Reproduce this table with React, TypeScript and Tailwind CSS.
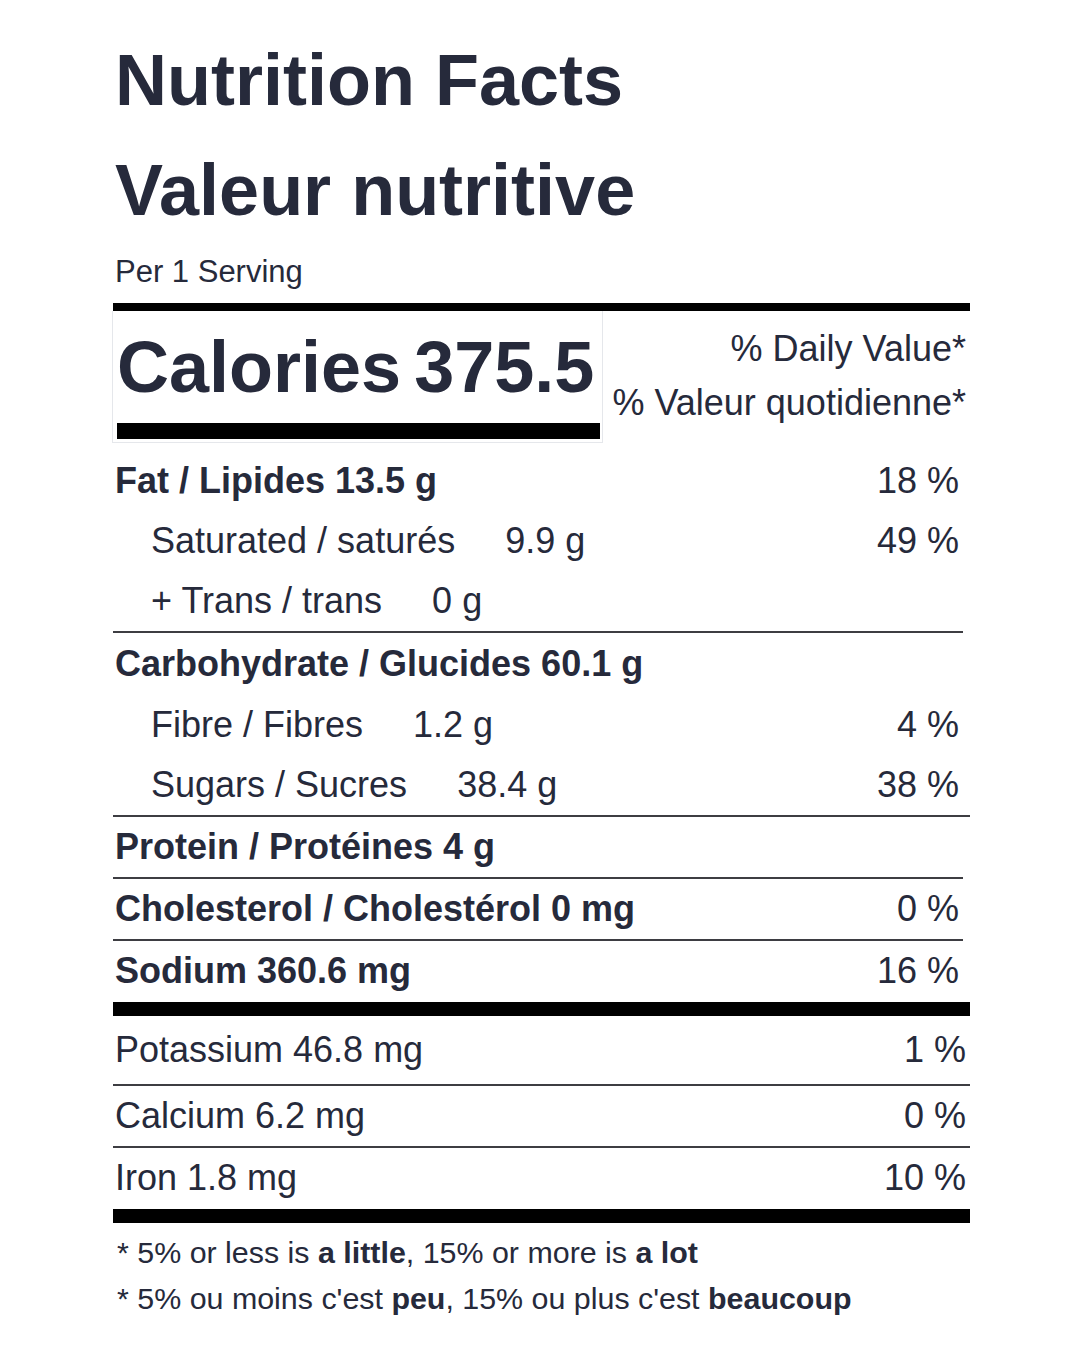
import React from 'react'

type Row = {
  label: string
  amount?: string
  dv?: string
  bold?: boolean
  indent?: boolean
  h?: string
}

// upper block: macro nutrients, separators drawn between groups
const fatGroup: Row[] = [
  { label: 'Fat / Lipides 13.5 g', dv: '18 %', bold: true },
  { label: 'Saturated / saturés', amount: '9.9 g', dv: '49 %', indent: true },
  { label: '+ Trans / trans', amount: '0 g', indent: true },
]

const carbGroup: Row[] = [
  { label: 'Carbohydrate / Glucides 60.1 g', bold: true, h: 'h-[61px]' },
  { label: 'Fibre / Fibres', amount: '1.2 g', dv: '4 %', indent: true, h: 'h-[61px]' },
  { label: 'Sugars / Sucres', amount: '38.4 g', dv: '38 %', indent: true },
]

const NutrientRow = ({ row }: { row: Row }) => (
  <div
    className={`flex items-center justify-between leading-[60px] text-[36px] ${row.h ?? 'h-[60px]'}`}
  >
    <div className={`flex ${row.indent ? 'pl-[38px]' : 'pl-[2px]'} ${row.bold ? 'font-bold' : ''}`}>
      <span>{row.label}</span>
      {row.amount && <span className="ml-[50px]">{row.amount}</span>}
    </div>
    {row.dv && <span className="pr-[11px]">{row.dv}</span>}
  </div>
)

const Rule = ({ short }: { short?: boolean }) => (
  <div className={`h-[2px] bg-[#3d3d42] ${short ? 'mr-[7px]' : ''}`} />
)

const MineralRow = ({ label, dv, h }: { label: string; dv: string; h: string }) => (
  <div className={`flex items-center justify-between text-[36px] ${h}`}>
    <span className="pl-[2px]">{label}</span>
    <span className="pr-[4px]">{dv}</span>
  </div>
)

export default function App() {
  return (
    <div
      className="w-[1080px] h-[1350px] bg-white text-[#262a3b] overflow-hidden"
      style={{ fontFamily: '"Liberation Sans", Arial, sans-serif' }}
    >
      <div className="ml-[112px] w-[858px] pt-[25px]">
        <h1 className="text-[72px] font-bold leading-[110px] ml-[3px]">Nutrition Facts</h1>
        <h1 className="text-[72px] font-bold leading-[110px] ml-[3px]">Valeur nutritive</h1>
        <p className="mt-[4px] text-[31px] leading-[45px] pl-[3px]">Per 1 Serving</p>

        <div className="mt-[9px] h-[8px] bg-black ml-[1px]" />

        {/* calories + daily value header */}
        <div className="flex h-[132px]">
          <div className="w-[491px] border border-t-0 border-[#e5e7eb] pl-[4px] pr-[2px] pt-[20px]">
            <div className="flex items-baseline text-[72px] font-bold leading-[72px]">
              <span>Calories</span>
              <span className="ml-[13px]">375.5</span>
            </div>
            <div className="mt-[20px] h-[16px] bg-black" />
          </div>
          <div className="flex-1 pt-[11px] pr-[4px] text-right text-[36px] leading-[54px]">
            <div>% Daily Value*</div>
            <div>% Valeur quotidienne*</div>
          </div>
        </div>

        <div className="mt-[8px] ml-[1px]">
          {fatGroup.map((r) => (
            <NutrientRow key={r.label} row={r} />
          ))}
          <Rule short />
          {carbGroup.map((r) => (
            <NutrientRow key={r.label} row={r} />
          ))}
          <Rule />
          <NutrientRow row={{ label: 'Protein / Protéines 4 g', bold: true }} />
          <Rule short />
          <NutrientRow row={{ label: 'Cholesterol / Cholestérol 0 mg', dv: '0 %', bold: true }} />
          <Rule short />
          <NutrientRow row={{ label: 'Sodium 360.6 mg', dv: '16 %', bold: true }} />
          <div className="mt-[1px] h-[14px] bg-black" />

          <MineralRow label="Potassium 46.8 mg" dv="1 %" h="h-[68px]" />
          <Rule />
          <MineralRow label="Calcium 6.2 mg" dv="0 %" h="h-[60px]" />
          <Rule />
          <MineralRow label="Iron 1.8 mg" dv="10 %" h="h-[60px]" />
          <div className="mt-[1px] h-[14px] bg-black" />

          <div className="mt-[6px] pl-[4px] text-[30.4px] leading-[46px]">
            <p>
              * 5% or less is <b>a little</b>, 15% or more is <b>a lot</b>
            </p>
            <p>
              * 5% ou moins c'est <b>peu</b>, 15% ou plus c'est <b>beaucoup</b>
            </p>
          </div>
        </div>
      </div>
    </div>
  )
}
